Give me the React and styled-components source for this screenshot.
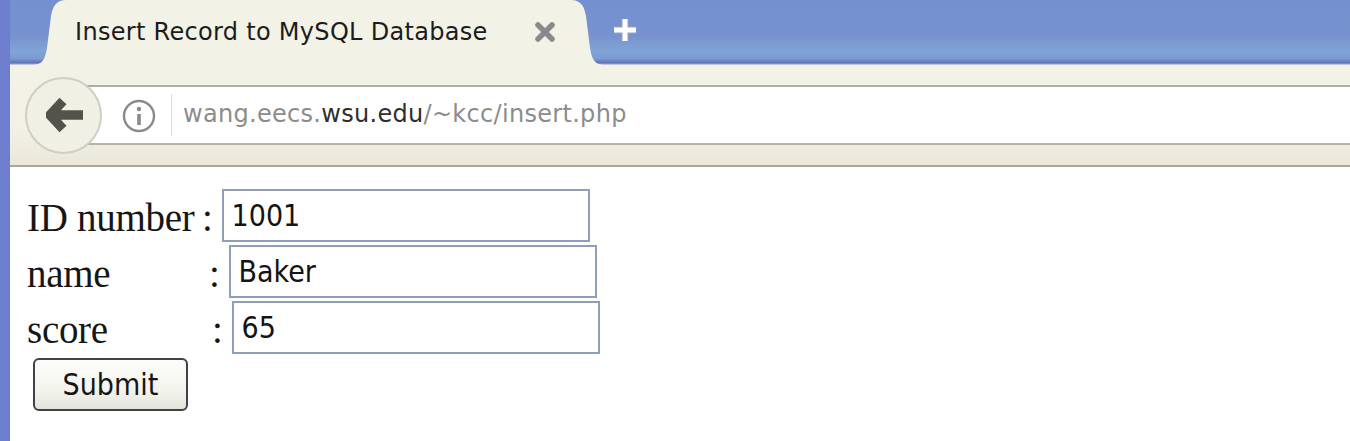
import styled, { createGlobalStyle } from "styled-components";

const GlobalStyle = createGlobalStyle`
  html, body {
    margin: 0;
    padding: 0;
    background: #fff;
  }
`;

const rows = [
  { label: "ID number", labelWidth: 175, value: "1001" },
  { label: "name", labelWidth: 182, value: "Baker" },
  { label: "score", labelWidth: 185, value: "65" },
];

const App = () => {
  return (
    <>
      <GlobalStyle />
      <StyledWindow>
        <StyledTabStrip>
          <StyledTab>
            <TabCurve />
            <StyledTabBody>
              <StyledTabTitle>Insert Record to MySQL Database</StyledTabTitle>
              <StyledClose viewBox="0 0 22 20" aria-hidden="true">
                <path d="M4 3 L18 17 M18 3 L4 17" />
              </StyledClose>
            </StyledTabBody>
            <TabCurve $flip />
          </StyledTab>
          <StyledNewTab viewBox="0 0 28 28" aria-hidden="true">
            <path className="edge" d="M14 3 V25 M3 14 H25" />
            <path d="M14 3 V25 M3 14 H25" />
          </StyledNewTab>
        </StyledTabStrip>

        <StyledToolbar>
          <StyledBackButton>
            <svg width="38" height="36" viewBox="0 0 38 36" aria-hidden="true">
              <path d="M17 4 L4 18 L17 32 M6 18 H37" />
            </svg>
          </StyledBackButton>
          <StyledUrlBar>
            <StyledInfo viewBox="0 0 34 34" aria-hidden="true">
              <circle cx="17" cy="17" r="15" />
              <circle className="dot" cx="17" cy="10" r="2.2" />
              <path d="M17 15 V26" />
            </StyledInfo>
            <StyledDivider />
            <StyledUrl>
              wang.eecs.<b>wsu.edu</b>/~kcc/insert.php
            </StyledUrl>
          </StyledUrlBar>
        </StyledToolbar>

        <StyledPage>
          <StyledForm onSubmit={(e) => e.preventDefault()}>
            {rows.map((row) => (
              <StyledRow key={row.label}>
                <StyledLabel $width={row.labelWidth}>{row.label}</StyledLabel>
                <StyledColon>:</StyledColon>
                <StyledInput type="text" defaultValue={row.value} />
              </StyledRow>
            ))}
            <StyledSubmit type="submit">Submit</StyledSubmit>
          </StyledForm>
        </StyledPage>
      </StyledWindow>
    </>
  );
};

const TabCurve = ({ $flip }) => (
  <StyledCurve $flip={$flip} viewBox="0 0 34 65" preserveAspectRatio="none" aria-hidden="true">
    <path d="M0 65 C10 65 13 60 15 48 L19 16 C21 5 25 0 34 0 L34 65 Z" />
  </StyledCurve>
);

export default App;

const StyledWindow = styled.div`
  width: 1350px;
  height: 441px;
  border-left: 10px solid #6c7ecd;
  box-sizing: border-box;
  overflow: hidden;
  background: #fff;
`;

const StyledTabStrip = styled.div`
  display: flex;
  align-items: flex-start;
  height: 65px;
  padding-left: 22px;
  background: linear-gradient(
    #7490cf 0%,
    #7892cf 55%,
    #80a4d7 78%,
    #7c9bd2 90%,
    #5e71b6 97%,
    #dfe3ec 100%
  );
`;

const StyledTab = styled.div`
  display: flex;
  height: 65px;
`;

const StyledCurve = styled.svg`
  width: 34px;
  height: 65px;
  display: block;
  transform: ${(p) => (p.$flip ? "scaleX(-1)" : "none")};

  path {
    fill: #f3f2e7;
  }
`;

const StyledTabBody = styled.div`
  display: flex;
  align-items: center;
  width: 505px;
  padding: 0 15px 0 9px;
  box-sizing: border-box;
  background: #f3f2e7;
`;

const StyledTabTitle = styled.span`
  font-family: "DejaVu Sans", "Liberation Sans", sans-serif;
  font-size: 24px;
  letter-spacing: 0.3px;
  color: #1c1c1c;
  padding-bottom: 2px;
  white-space: nowrap;
`;

const StyledClose = styled.svg`
  width: 22px;
  height: 20px;
  margin-left: auto;
  margin-bottom: 1px;

  path {
    stroke: #8a8a8a;
    stroke-width: 5.5;
    stroke-linecap: round;
    fill: none;
  }
`;

const StyledNewTab = styled.svg`
  width: 28px;
  height: 28px;
  margin: 16px 0 0 6px;

  path {
    stroke: #fff;
    stroke-width: 5;
    fill: none;
  }

  .edge {
    stroke: #9aa3b8;
    stroke-width: 7;
  }
`;

const StyledToolbar = styled.div`
  display: flex;
  align-items: center;
  height: 100px;
  padding-left: 15px;
  border-bottom: 2px solid #a9a89f;
  background: linear-gradient(#f3f2e7 0%, #f2f1e5 60%, #e9e8d9 100%);
`;

const StyledBackButton = styled.div`
  position: relative;
  z-index: 1;
  display: flex;
  align-items: center;
  justify-content: center;
  width: 77px;
  height: 77px;
  margin: 0 -22px 0 0;
  border: 2px solid #cfcec5;
  border-radius: 50%;
  box-sizing: border-box;
  background: #f1f0e5;

  svg {
    margin-left: 2px;
  }

  path {
    stroke: #53534c;
    stroke-width: 9.5;
    stroke-linejoin: round;
    fill: none;
  }
`;

const StyledUrlBar = styled.div`
  flex: 1;
  display: flex;
  align-items: center;
  height: 60px;
  padding-left: 42px;
  border-top: 2px solid #aeada4;
  border-bottom: 2px solid #b3b2a9;
  box-sizing: border-box;
  background: #fff;
`;

const StyledInfo = styled.svg`
  width: 34px;
  height: 34px;
  margin-top: 1px;

  circle {
    stroke: #8a8a8a;
    stroke-width: 2.4;
    fill: none;
  }

  .dot {
    fill: #8a8a8a;
    stroke: none;
  }

  path {
    stroke: #8a8a8a;
    stroke-width: 3.6;
  }
`;

const StyledDivider = styled.span`
  width: 1px;
  height: 42px;
  margin: 0 11px 0 15px;
  background: #dedcd6;
`;

const StyledUrl = styled.span`
  font-family: "DejaVu Sans", "Liberation Sans", sans-serif;
  font-size: 24px;
  letter-spacing: 0.3px;
  color: #8c8c8c;
  padding-bottom: 2px;

  b {
    font-weight: normal;
    color: #2e2e2e;
  }
`;

const StyledPage = styled.div`
  padding: 22px 0 0 17px;
`;

const StyledForm = styled.form`
  display: flex;
  flex-direction: column;
  align-items: flex-start;
  gap: 3px;
  margin: 0;
`;

const StyledRow = styled.div`
  display: flex;
  align-items: center;
  height: 53px;
`;

const StyledLabel = styled.span`
  width: ${(p) => p.$width}px;
  font-family: "Liberation Serif", serif;
  font-size: 39px;
  letter-spacing: -0.3px;
  color: #161616;
  padding-top: 4px;
  white-space: nowrap;
`;

const StyledColon = styled(StyledLabel)`
  width: auto;
`;

const StyledInput = styled.input`
  width: 368px;
  height: 53px;
  margin-left: 9px;
  padding: 0 8px;
  border: 2px solid #8e9fba;
  box-sizing: border-box;
  outline: none;
  font-family: "DejaVu Sans Condensed", "Liberation Sans", sans-serif;
  font-size: 30px;
  color: #141414;
  background: #fff;
`;

const StyledSubmit = styled.button`
  width: 155px;
  height: 53px;
  margin: 1px 0 0 6px;
  border: 2px solid #3f4246;
  border-radius: 6px;
  box-sizing: border-box;
  background: linear-gradient(#fdfdfb 0%, #f4f4ee 60%, #e4e3da 100%);
  font-family: "DejaVu Sans Condensed", "Liberation Sans", sans-serif;
  font-size: 30px;
  color: #161616;
  cursor: pointer;
`;
